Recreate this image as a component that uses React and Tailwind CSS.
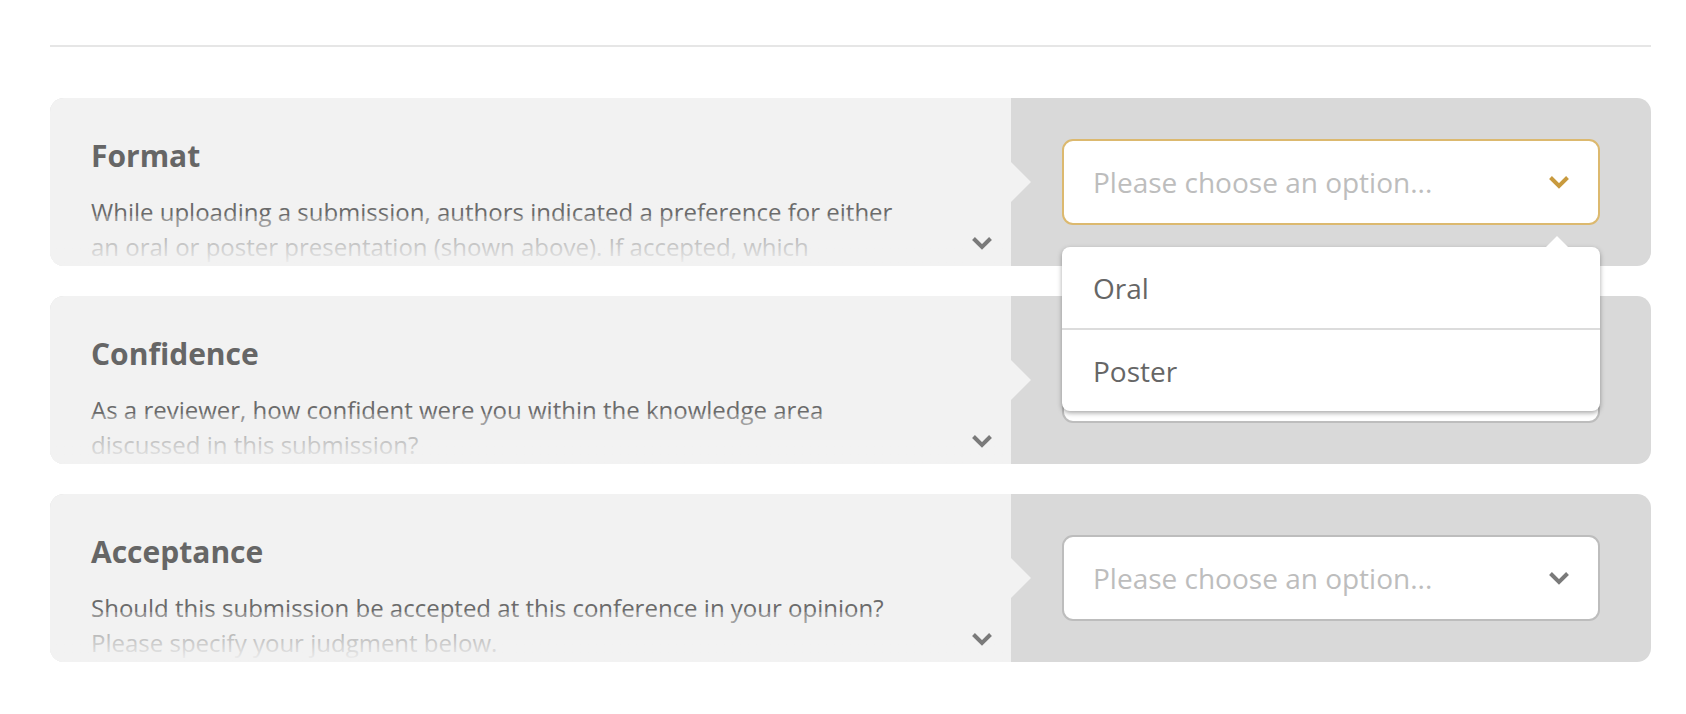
import React from "react";

const questions = [
  {
    title: "Format",
    text: "While uploading a submission, authors indicated a preference for either an oral or poster presentation (shown above). If accepted, which presentation type would you recommend?",
    open: true,
  },
  {
    title: "Confidence",
    text: "As a reviewer, how confident were you within the knowledge area discussed in this submission?",
  },
  {
    title: "Acceptance",
    text: "Should this submission be accepted at this conference in your opinion? Please specify your judgment below.",
  },
];

function Chevron({ className }) {
  return (
    <svg viewBox="0 0 22 14" className={className} fill="none">
      <polyline points="2.5,2.5 11,11 19.5,2.5" stroke="currentColor" strokeWidth="4" />
    </svg>
  );
}

function Menu() {
  return (
    <div className="absolute left-0 right-0 top-[108px] z-10 rounded-[8px] bg-white shadow-[0_2px_5px_rgba(0,0,0,0.35)]">
      {/* little pointer under the chevron */}
      <div className="absolute right-[32px] top-[-11px] h-0 w-0 border-x-[11px] border-b-[11px] border-x-transparent border-b-white" />
      <div className="flex h-[83px] items-center border-b-2 border-[#dcdcdc] pl-[31px] text-[28px] text-[#666]">
        Oral
      </div>
      <div className="flex h-[81px] items-center pl-[31px] text-[28px] text-[#666]">
        Poster
      </div>
    </div>
  );
}

function Question({ q }) {
  return (
    <div className="flex h-[168px] rounded-[14px] bg-[#d9d9d9]">
      <div className="relative w-[961px] shrink-0 rounded-l-[14px] bg-[#f2f2f2]">
        <div className="h-full overflow-hidden rounded-l-[14px] pl-[41px] pr-[105px] pt-[40px]">
          <h2 className="text-[30px] font-bold leading-[36px] text-[#666]">{q.title}</h2>
          <p className="mt-[20px] text-[24px] leading-[35px] text-[#6b6b6b]">{q.text}</p>
        </div>
        <div className="pointer-events-none absolute bottom-0 left-0 right-0 h-[50px] rounded-bl-[14px] bg-gradient-to-b from-[#f2f2f240] to-[#f2f2f2]" />
        <Chevron className="absolute bottom-[16px] right-[18px] h-[14px] w-[22px] text-[#7a7a7a]" />
        <div className="absolute right-[-20px] top-1/2 -mt-[20px] h-0 w-0 border-y-[20px] border-l-[20px] border-y-transparent border-l-[#f2f2f2]" />
      </div>
      <div className="flex flex-1 items-center px-[51px]">
        <div className="relative w-full">
          <div
            className={
              q.open
                ? "flex h-[86px] items-center justify-between rounded-[11px] border-2 border-[#dcb96f] bg-white pl-[29px] pr-[28px]"
                : "flex h-[86px] items-center justify-between rounded-[11px] border-2 border-[#bdbdbd] bg-white pl-[29px] pr-[28px]"
            }
          >
            <span className="text-[28px] text-[#bdbdbd]">Please choose an option...</span>
            <Chevron
              className={q.open ? "h-[14px] w-[22px] text-[#c89a3e]" : "h-[14px] w-[22px] text-[#7a7a7a]"}
            />
          </div>
          {q.open && <Menu />}
        </div>
      </div>
    </div>
  );
}

export default function App() {
  return (
    <div className="min-h-[714px] bg-white pl-[50px] pr-[35px] pt-[45px] font-['Open_Sans',sans-serif]">
      <div className="h-[2px] bg-[#e6e6e6]" />
      <div className="mt-[51px] flex flex-col gap-[30px]">
        {questions.map((q) => (
          <Question key={q.title} q={q} />
        ))}
      </div>
    </div>
  );
}
